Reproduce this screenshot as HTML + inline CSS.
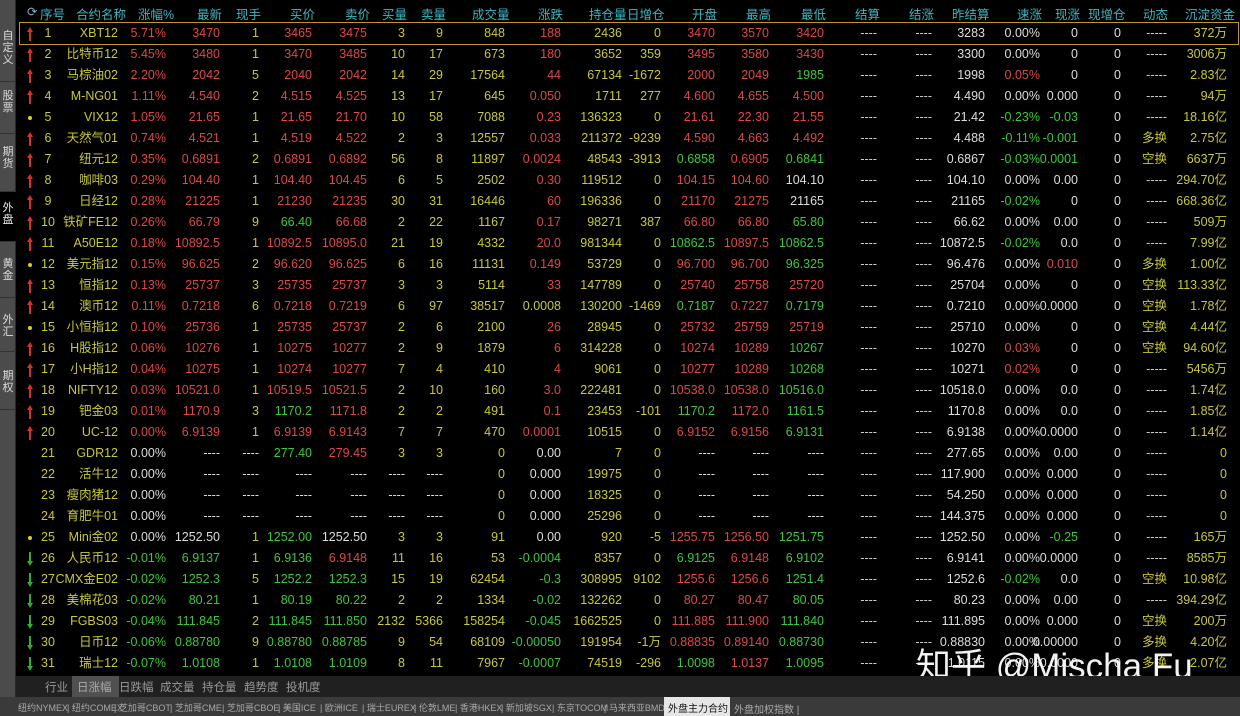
<!DOCTYPE html>
<html><head><meta charset="utf-8"><style>
*{margin:0;padding:0;box-sizing:border-box}
body{width:1240px;height:716px;background:#000;overflow:hidden;position:relative;font-family:"Liberation Sans","Noto Sans CJK SC",sans-serif;font-size:12.5px;color:#c8c83a}
#side{position:absolute;left:0;top:0;width:16px;height:697px;background:#4b4b4b;border-right:1px solid #2a2a2a}
.tab{position:absolute;left:0;width:16px;color:#ddd;font-size:11px;line-height:12px;text-align:center;border-bottom:1px solid #333}
.tab.on{background:#000;color:#eee}
.hd{position:absolute;top:4px;color:#3fb4c4;font-size:12.5px;white-space:nowrap}
.row{position:absolute;left:17px;width:1223px;height:21px}
.row span{position:absolute;top:3px;white-space:nowrap;line-height:15px}
.row span:nth-child(1){left:8px;top:4px;width:10px;height:14px}
.row span:nth-child(2){left:19px;width:24px;text-align:center}
.row span:nth-child(3){right:1122px}
.row span:nth-child(4){right:1074px}
.row span:nth-child(5){right:1020px}
.row span:nth-child(6){right:981px}
.row span:nth-child(7){right:928px}
.row span:nth-child(8){right:873px}
.row span:nth-child(9){right:835px}
.row span:nth-child(10){right:797px}
.row span:nth-child(11){right:735px}
.row span:nth-child(12){right:679px}
.row span:nth-child(13){right:618px}
.row span:nth-child(14){right:579px}
.row span:nth-child(15){right:525px}
.row span:nth-child(16){right:471px}
.row span:nth-child(17){right:416px}
.row span:nth-child(18){right:363px;color:#ccc}
.row span:nth-child(19){right:308px;color:#ccc}
.row span:nth-child(20){right:255px;color:#ddd}
.row span:nth-child(21){right:200px;color:#ddd}
.row span:nth-child(22){right:162px;color:#ddd}
.row span:nth-child(23){right:119px;color:#ddd}
.row span:nth-child(24){right:73px;color:#ccc}
.row span:nth-child(25){right:13px}
.row span.r{color:#de4848!important}.row span.g{color:#3cc83c!important}.row span.w{color:#dcdcdc!important}.row span.y{color:#c8c83a!important}
.up::before{content:"";position:absolute;left:2px;top:0;border-left:3px solid transparent;border-right:3px solid transparent;border-bottom:5px solid #d83030}
.up::after{content:"";position:absolute;left:4px;top:4px;width:2px;height:10px;background:#d83030}
.dn::before{content:"";position:absolute;left:2px;bottom:0;border-left:3px solid transparent;border-right:3px solid transparent;border-top:5px solid #30b030}
.dn::after{content:"";position:absolute;left:4px;top:0;width:2px;height:10px;background:#30b030}
.dt::after{content:"";position:absolute;left:3px;top:5px;width:4px;height:4px;border-radius:50%;background:#d8d020}
#b1{position:absolute;left:16px;top:676px;width:1224px;height:21px;background:#202020;color:#9a9a9a;font-size:11.5px}
#b1 i{font-style:normal;position:absolute;top:3px}
#b2{position:absolute;left:0;top:697px;width:1240px;height:19px;background:#3a3a3a;color:#aaa;font-size:9px;white-space:nowrap}
#b2 i{font-style:normal;position:absolute;top:4px}
#wm{position:absolute;left:916px;top:638px;color:#fff;font-size:35px;white-space:nowrap;font-family:"Liberation Sans","Noto Sans CJK SC",sans-serif;opacity:.95}
</style></head><body>
<div id="side">
<div class="tab" style="top:24px;height:58px;padding-top:6px">自<br>定<br>义</div>
<div class="tab" style="top:82px;height:52px;padding-top:8px">股<br>票</div>
<div class="tab" style="top:134px;height:58px;padding-top:12px">期<br>货</div>
<div class="tab on" style="top:192px;height:50px;padding-top:10px">外<br>盘</div>
<div class="tab" style="top:242px;height:56px;padding-top:16px">黄<br>金</div>
<div class="tab" style="top:298px;height:54px;padding-top:16px">外<br>汇</div>
<div class="tab" style="top:352px;height:58px;padding-top:18px">期<br>权</div>
</div>
<div class="hd" style="left:27px;color:#8ab">⟳</div>
<div class="hd" style="left:40px">序号</div><div class="hd" style="left:76px">合约名称</div><div class="hd" style="left:138px">涨幅%</div><div class="hd" style="left:197px">最新</div><div class="hd" style="left:236px">现手</div><div class="hd" style="left:290px">买价</div><div class="hd" style="left:345px">卖价</div><div class="hd" style="left:382px">买量</div><div class="hd" style="left:421px">卖量</div><div class="hd" style="left:472px">成交量</div><div class="hd" style="left:538px">涨跌</div><div class="hd" style="left:589px">持仓量</div><div class="hd" style="left:627px">日增仓</div><div class="hd" style="left:692px">开盘</div><div class="hd" style="left:746px">最高</div><div class="hd" style="left:801px">最低</div><div class="hd" style="left:855px">结算</div><div class="hd" style="left:909px">结涨</div><div class="hd" style="left:952px">昨结算</div><div class="hd" style="left:1017px">速涨</div><div class="hd" style="left:1055px">现涨</div><div class="hd" style="left:1088px">现增仓</div><div class="hd" style="left:1143px">动态</div><div class="hd" style="left:1185px">沉淀资金</div>
<div style="position:absolute;left:19px;top:22px;width:1220px;height:23px;border:1px solid #c89030"></div>

<div class="row" style="top:23px"><span class="up"></span><span>1</span><span>XBT12</span><span class="r">5.71%</span><span class="r">3470</span><span>1</span><span class="r">3465</span><span class="r">3475</span><span>3</span><span>9</span><span>848</span><span class="r">188</span><span>2436</span><span>0</span><span class="r">3470</span><span class="r">3570</span><span class="r">3420</span><span>----</span><span>----</span><span>3283</span><span>0.00%</span><span>0</span><span>0</span><span>-----</span><span>372万</span></div>
<div class="row" style="top:44px"><span class="up"></span><span>2</span><span>比特币12</span><span class="r">5.45%</span><span class="r">3480</span><span>1</span><span class="r">3470</span><span class="r">3485</span><span>10</span><span>17</span><span>673</span><span class="r">180</span><span>3652</span><span>359</span><span class="r">3495</span><span class="r">3580</span><span class="r">3430</span><span>----</span><span>----</span><span>3300</span><span>0.00%</span><span>0</span><span>0</span><span>-----</span><span>3006万</span></div>
<div class="row" style="top:65px"><span class="up"></span><span>3</span><span>马棕油02</span><span class="r">2.20%</span><span class="r">2042</span><span>5</span><span class="r">2040</span><span class="r">2042</span><span>14</span><span>29</span><span>17564</span><span class="r">44</span><span>67134</span><span>-1672</span><span class="r">2000</span><span class="r">2049</span><span class="g">1985</span><span>----</span><span>----</span><span>1998</span><span class="r">0.05%</span><span>0</span><span>0</span><span>-----</span><span>2.83亿</span></div>
<div class="row" style="top:86px"><span class="up"></span><span>4</span><span>M-NG01</span><span class="r">1.11%</span><span class="r">4.540</span><span>2</span><span class="r">4.515</span><span class="r">4.525</span><span>13</span><span>17</span><span>645</span><span class="r">0.050</span><span>1711</span><span>277</span><span class="r">4.600</span><span class="r">4.655</span><span class="r">4.500</span><span>----</span><span>----</span><span>4.490</span><span>0.00%</span><span>0.000</span><span>0</span><span>-----</span><span>94万</span></div>
<div class="row" style="top:107px"><span class="dt"></span><span>5</span><span>VIX12</span><span class="r">1.05%</span><span class="r">21.65</span><span>1</span><span class="r">21.65</span><span class="r">21.70</span><span>10</span><span>58</span><span>7088</span><span class="r">0.23</span><span>136323</span><span>0</span><span class="r">21.61</span><span class="r">22.30</span><span class="r">21.55</span><span>----</span><span>----</span><span>21.42</span><span class="g">-0.23%</span><span class="g">-0.03</span><span>0</span><span>-----</span><span>18.16亿</span></div>
<div class="row" style="top:128px"><span class="up"></span><span>6</span><span>天然气01</span><span class="r">0.74%</span><span class="r">4.521</span><span>1</span><span class="r">4.519</span><span class="r">4.522</span><span>2</span><span>3</span><span>12557</span><span class="r">0.033</span><span>211372</span><span>-9239</span><span class="r">4.590</span><span class="r">4.663</span><span class="r">4.492</span><span>----</span><span>----</span><span>4.488</span><span class="g">-0.11%</span><span class="g">-0.001</span><span>0</span><span class="y">多换</span><span>2.75亿</span></div>
<div class="row" style="top:149px"><span class="up"></span><span>7</span><span>纽元12</span><span class="r">0.35%</span><span class="r">0.6891</span><span>2</span><span class="r">0.6891</span><span class="r">0.6892</span><span>56</span><span>8</span><span>11897</span><span class="r">0.0024</span><span>48543</span><span>-3913</span><span class="g">0.6858</span><span class="r">0.6905</span><span class="g">0.6841</span><span>----</span><span>----</span><span>0.6867</span><span class="g">-0.03%</span><span class="g">0.0001</span><span>0</span><span class="y">空换</span><span>6637万</span></div>
<div class="row" style="top:170px"><span class="up"></span><span>8</span><span>咖啡03</span><span class="r">0.29%</span><span class="r">104.40</span><span>1</span><span class="r">104.40</span><span class="r">104.45</span><span>6</span><span>5</span><span>2502</span><span class="r">0.30</span><span>119512</span><span>0</span><span class="r">104.15</span><span class="r">104.60</span><span class="w">104.10</span><span>----</span><span>----</span><span>104.10</span><span>0.00%</span><span>0.00</span><span>0</span><span>-----</span><span>294.70亿</span></div>
<div class="row" style="top:191px"><span class="up"></span><span>9</span><span>日经12</span><span class="r">0.28%</span><span class="r">21225</span><span>1</span><span class="r">21230</span><span class="r">21235</span><span>30</span><span>31</span><span>16446</span><span class="r">60</span><span>196336</span><span>0</span><span class="r">21170</span><span class="r">21275</span><span class="w">21165</span><span>----</span><span>----</span><span>21165</span><span class="g">-0.02%</span><span>0</span><span>0</span><span>-----</span><span>668.36亿</span></div>
<div class="row" style="top:212px"><span class="up"></span><span>10</span><span>铁矿FE12</span><span class="r">0.26%</span><span class="r">66.79</span><span>9</span><span class="g">66.40</span><span class="r">66.68</span><span>2</span><span>22</span><span>1167</span><span class="r">0.17</span><span>98271</span><span>387</span><span class="r">66.80</span><span class="r">66.80</span><span class="g">65.80</span><span>----</span><span>----</span><span>66.62</span><span>0.00%</span><span>0.00</span><span>0</span><span>-----</span><span>509万</span></div>
<div class="row" style="top:233px"><span class="up"></span><span>11</span><span>A50E12</span><span class="r">0.18%</span><span class="r">10892.5</span><span>1</span><span class="r">10892.5</span><span class="r">10895.0</span><span>21</span><span>19</span><span>4332</span><span class="r">20.0</span><span>981344</span><span>0</span><span class="g">10862.5</span><span class="r">10897.5</span><span class="g">10862.5</span><span>----</span><span>----</span><span>10872.5</span><span class="g">-0.02%</span><span>0.0</span><span>0</span><span>-----</span><span>7.99亿</span></div>
<div class="row" style="top:254px"><span class="dt"></span><span>12</span><span>美元指12</span><span class="r">0.15%</span><span class="r">96.625</span><span>2</span><span class="r">96.620</span><span class="r">96.625</span><span>6</span><span>16</span><span>11131</span><span class="r">0.149</span><span>53729</span><span>0</span><span class="r">96.700</span><span class="r">96.700</span><span class="g">96.325</span><span>----</span><span>----</span><span>96.476</span><span>0.00%</span><span class="r">0.010</span><span>0</span><span class="y">多换</span><span>1.00亿</span></div>
<div class="row" style="top:275px"><span class="up"></span><span>13</span><span>恒指12</span><span class="r">0.13%</span><span class="r">25737</span><span>3</span><span class="r">25735</span><span class="r">25737</span><span>3</span><span>3</span><span>5114</span><span class="r">33</span><span>147789</span><span>0</span><span class="r">25740</span><span class="r">25758</span><span class="r">25720</span><span>----</span><span>----</span><span>25704</span><span>0.00%</span><span>0</span><span>0</span><span class="y">空换</span><span>113.33亿</span></div>
<div class="row" style="top:296px"><span class="up"></span><span>14</span><span>澳币12</span><span class="r">0.11%</span><span class="r">0.7218</span><span>6</span><span class="r">0.7218</span><span class="r">0.7219</span><span>6</span><span>97</span><span>38517</span><span>0.0008</span><span>130200</span><span>-1469</span><span class="g">0.7187</span><span class="r">0.7227</span><span class="g">0.7179</span><span>----</span><span>----</span><span>0.7210</span><span>0.00%</span><span>0.0000</span><span>0</span><span class="y">空换</span><span>1.78亿</span></div>
<div class="row" style="top:317px"><span class="dt"></span><span>15</span><span>小恒指12</span><span class="r">0.10%</span><span class="r">25736</span><span>1</span><span class="r">25735</span><span class="r">25737</span><span>2</span><span>6</span><span>2100</span><span class="r">26</span><span>28945</span><span>0</span><span class="r">25732</span><span class="r">25759</span><span class="r">25719</span><span>----</span><span>----</span><span>25710</span><span>0.00%</span><span>0</span><span>0</span><span class="y">空换</span><span>4.44亿</span></div>
<div class="row" style="top:338px"><span class="up"></span><span>16</span><span>H股指12</span><span class="r">0.06%</span><span class="r">10276</span><span>1</span><span class="r">10275</span><span class="r">10277</span><span>2</span><span>9</span><span>1879</span><span class="r">6</span><span>314228</span><span>0</span><span class="r">10274</span><span class="r">10289</span><span class="g">10267</span><span>----</span><span>----</span><span>10270</span><span class="r">0.03%</span><span>0</span><span>0</span><span class="y">空换</span><span>94.60亿</span></div>
<div class="row" style="top:359px"><span class="up"></span><span>17</span><span>小H指12</span><span class="r">0.04%</span><span class="r">10275</span><span>1</span><span class="r">10274</span><span class="r">10277</span><span>7</span><span>4</span><span>410</span><span class="r">4</span><span>9061</span><span>0</span><span class="r">10277</span><span class="r">10289</span><span class="g">10268</span><span>----</span><span>----</span><span>10271</span><span class="r">0.02%</span><span>0</span><span>0</span><span>-----</span><span>5456万</span></div>
<div class="row" style="top:380px"><span class="up"></span><span>18</span><span>NIFTY12</span><span class="r">0.03%</span><span class="r">10521.0</span><span>1</span><span class="r">10519.5</span><span class="r">10521.5</span><span>2</span><span>10</span><span>160</span><span class="r">3.0</span><span>222481</span><span>0</span><span class="r">10538.0</span><span class="r">10538.0</span><span class="g">10516.0</span><span>----</span><span>----</span><span>10518.0</span><span>0.00%</span><span>0.0</span><span>0</span><span>-----</span><span>1.74亿</span></div>
<div class="row" style="top:401px"><span class="up"></span><span>19</span><span>钯金03</span><span class="r">0.01%</span><span class="r">1170.9</span><span>3</span><span class="g">1170.2</span><span class="r">1171.8</span><span>2</span><span>2</span><span>491</span><span class="r">0.1</span><span>23453</span><span>-101</span><span class="g">1170.2</span><span class="r">1172.0</span><span class="g">1161.5</span><span>----</span><span>----</span><span>1170.8</span><span>0.00%</span><span>0.0</span><span>0</span><span>-----</span><span>1.85亿</span></div>
<div class="row" style="top:422px"><span class="up"></span><span>20</span><span>UC-12</span><span class="r">0.00%</span><span class="r">6.9139</span><span>1</span><span class="r">6.9139</span><span class="r">6.9143</span><span>7</span><span>7</span><span>470</span><span class="r">0.0001</span><span>10515</span><span>0</span><span class="r">6.9152</span><span class="r">6.9156</span><span class="g">6.9131</span><span>----</span><span>----</span><span>6.9138</span><span>0.00%</span><span>0.0000</span><span>0</span><span>-----</span><span>1.14亿</span></div>
<div class="row" style="top:443px"><span></span><span>21</span><span>GDR12</span><span class="w">0.00%</span><span class="w">----</span><span class="w">----</span><span class="g">277.40</span><span class="r">279.45</span><span>3</span><span>3</span><span>0</span><span class="w">0.00</span><span>7</span><span>0</span><span class="w">----</span><span class="w">----</span><span class="w">----</span><span>----</span><span>----</span><span>277.65</span><span>0.00%</span><span>0.00</span><span>0</span><span>-----</span><span>0</span></div>
<div class="row" style="top:464px"><span></span><span>22</span><span>活牛12</span><span class="w">0.00%</span><span class="w">----</span><span class="w">----</span><span class="w">----</span><span class="w">----</span><span class="w">----</span><span class="w">----</span><span>0</span><span class="w">0.000</span><span>19975</span><span>0</span><span class="w">----</span><span class="w">----</span><span class="w">----</span><span>----</span><span>----</span><span>117.900</span><span>0.00%</span><span>0.000</span><span>0</span><span>-----</span><span>0</span></div>
<div class="row" style="top:485px"><span></span><span>23</span><span>瘦肉猪12</span><span class="w">0.00%</span><span class="w">----</span><span class="w">----</span><span class="w">----</span><span class="w">----</span><span class="w">----</span><span class="w">----</span><span>0</span><span class="w">0.000</span><span>18325</span><span>0</span><span class="w">----</span><span class="w">----</span><span class="w">----</span><span>----</span><span>----</span><span>54.250</span><span>0.00%</span><span>0.000</span><span>0</span><span>-----</span><span>0</span></div>
<div class="row" style="top:506px"><span></span><span>24</span><span>育肥牛01</span><span class="w">0.00%</span><span class="w">----</span><span class="w">----</span><span class="w">----</span><span class="w">----</span><span class="w">----</span><span class="w">----</span><span>0</span><span class="w">0.000</span><span>25296</span><span>0</span><span class="w">----</span><span class="w">----</span><span class="w">----</span><span>----</span><span>----</span><span>144.375</span><span>0.00%</span><span>0.000</span><span>0</span><span>-----</span><span>0</span></div>
<div class="row" style="top:527px"><span class="dt"></span><span>25</span><span>Mini金02</span><span class="w">0.00%</span><span class="w">1252.50</span><span>1</span><span class="g">1252.00</span><span class="w">1252.50</span><span>3</span><span>3</span><span>91</span><span class="w">0.00</span><span>920</span><span>-5</span><span class="r">1255.75</span><span class="r">1256.50</span><span class="g">1251.75</span><span>----</span><span>----</span><span>1252.50</span><span>0.00%</span><span class="g">-0.25</span><span>0</span><span>-----</span><span>165万</span></div>
<div class="row" style="top:548px"><span class="dn"></span><span>26</span><span>人民币12</span><span class="g">-0.01%</span><span class="g">6.9137</span><span>1</span><span class="g">6.9136</span><span class="r">6.9148</span><span>11</span><span>16</span><span>53</span><span class="g">-0.0004</span><span>8357</span><span>0</span><span class="g">6.9125</span><span class="r">6.9148</span><span class="g">6.9102</span><span>----</span><span>----</span><span>6.9141</span><span>0.00%</span><span>0.0000</span><span>0</span><span>-----</span><span>8585万</span></div>
<div class="row" style="top:569px"><span class="dn"></span><span>27</span><span>CMX金E02</span><span class="g">-0.02%</span><span class="g">1252.3</span><span>5</span><span class="g">1252.2</span><span class="g">1252.3</span><span>15</span><span>19</span><span>62454</span><span class="g">-0.3</span><span>308995</span><span>9102</span><span class="r">1255.6</span><span class="r">1256.6</span><span class="g">1251.4</span><span>----</span><span>----</span><span>1252.6</span><span class="g">-0.02%</span><span>0.0</span><span>0</span><span class="y">空换</span><span>10.98亿</span></div>
<div class="row" style="top:590px"><span class="dn"></span><span>28</span><span>美棉花03</span><span class="g">-0.02%</span><span class="g">80.21</span><span>1</span><span class="g">80.19</span><span class="g">80.22</span><span>2</span><span>2</span><span>1334</span><span class="g">-0.02</span><span>132262</span><span>0</span><span class="r">80.27</span><span class="r">80.47</span><span class="g">80.05</span><span>----</span><span>----</span><span>80.23</span><span>0.00%</span><span>0.00</span><span>0</span><span>-----</span><span>394.29亿</span></div>
<div class="row" style="top:611px"><span class="dn"></span><span>29</span><span>FGBS03</span><span class="g">-0.04%</span><span class="g">111.845</span><span>2</span><span class="g">111.845</span><span class="g">111.850</span><span>2132</span><span>5366</span><span>158254</span><span class="g">-0.045</span><span>1662525</span><span>0</span><span class="r">111.885</span><span class="r">111.900</span><span class="g">111.840</span><span>----</span><span>----</span><span>111.895</span><span>0.00%</span><span>0.000</span><span>0</span><span class="y">空换</span><span>200万</span></div>
<div class="row" style="top:632px"><span class="dn"></span><span>30</span><span>日币12</span><span class="g">-0.06%</span><span class="g">0.88780</span><span>9</span><span class="g">0.88780</span><span class="g">0.88785</span><span>9</span><span>54</span><span>68109</span><span class="g">-0.00050</span><span>191954</span><span>-1万</span><span class="r">0.88835</span><span class="r">0.89140</span><span class="g">0.88730</span><span>----</span><span>----</span><span>0.88830</span><span>0.00%</span><span>0.00000</span><span>0</span><span class="y">多换</span><span>4.20亿</span></div>
<div class="row" style="top:653px"><span class="dn"></span><span>31</span><span>瑞士12</span><span class="g">-0.07%</span><span class="g">1.0108</span><span>1</span><span class="g">1.0108</span><span class="g">1.0109</span><span>8</span><span>11</span><span>7967</span><span class="g">-0.0007</span><span>74519</span><span>-296</span><span class="g">1.0098</span><span class="r">1.0137</span><span class="g">1.0095</span><span>----</span><span>----</span><span>1.0115</span><span>0.00%</span><span>0.0000</span><span>0</span><span class="y">多换</span><span>2.07亿</span></div>

<div id="wm">知乎 @Mischa Fu</div>

<div id="b1">
<i style="left:29px">行业</i>
<i style="left:56px;top:0;height:21px;width:47px;background:#505050;color:#aaa;padding:3px 0 0 5px">日涨幅</i>
<i style="left:103px">日跌幅</i><i style="left:144px">成交量</i><i style="left:186px">持仓量</i><i style="left:228px">趋势度</i><i style="left:270px">投机度</i>
</div>
<div id="b2">
<i style="left:18px">纽约NYMEX</i><i style="left:67px">| 纽约COMEX</i><i style="left:114px">| 芝加哥CBOT</i><i style="left:170px">| 芝加哥CME</i><i style="left:222px">| 芝加哥CBOE</i><i style="left:278px">| 美国ICE</i><i style="left:320px">| 欧洲ICE</i><i style="left:362px">| 瑞士EUREX</i><i style="left:414px">| 伦敦LME</i><i style="left:455px">| 香港HKEX</i><i style="left:501px">| 新加坡SGX</i><i style="left:552px">| 东京TOCOM</i><i style="left:604px">| 马来西亚BMD</i>
<i style="left:664px;top:0;height:19px;width:66px;background:#e6e6e6;color:#111;padding:3px 0 0 4px;font-size:10px">外盘主力合约</i>
<i style="left:734px;font-size:10px">外盘加权指数 |</i>
</div>
</body></html>
